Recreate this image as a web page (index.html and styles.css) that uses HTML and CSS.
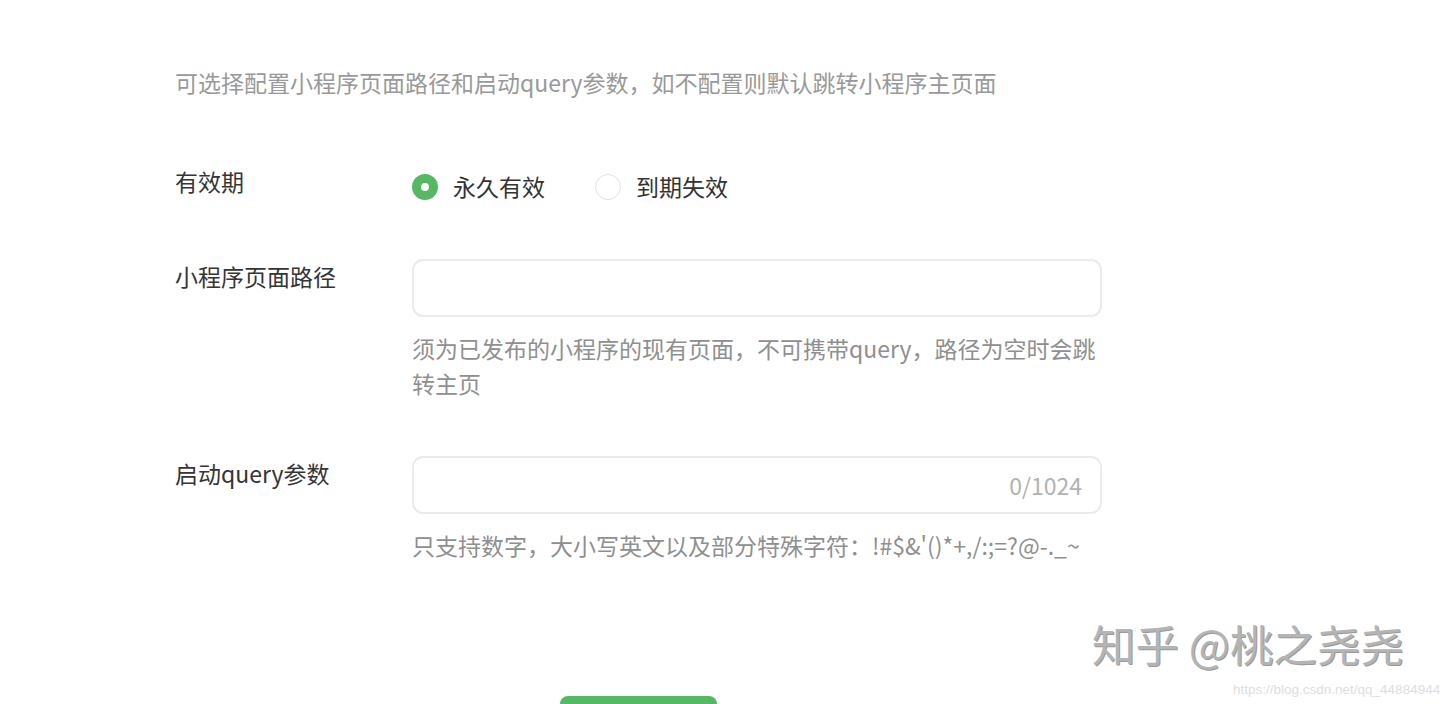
FILE: index.html
```html
<!DOCTYPE html>
<html lang="zh">
<head>
<meta charset="utf-8">
<title>小程序页面路径</title>
<link rel="stylesheet" href="styles.css">
</head>
<body>
<div class="page">
  <p class="intro">可选择配置小程序页面路径和启动query参数，如不配置则默认跳转小程序主页面</p>
  <div class="form">
    <div class="row row-validity">
      <div class="label">有效期</div>
      <div class="options">
        <label class="radio"><span class="dot checked"></span><span>永久有效</span></label>
        <label class="radio"><span class="dot"></span><span>到期失效</span></label>
      </div>
    </div>
    <div class="row row-path">
      <div class="label">小程序页面路径</div>
      <div class="field">
        <div class="input"></div>
        <p class="help">须为已发布的小程序的现有页面，不可携带query，路径为空时会跳转主页</p>
      </div>
    </div>
    <div class="row row-query">
      <div class="label">启动query参数</div>
      <div class="field">
        <div class="input"><span class="counter">0/1024</span></div>
        <p class="help">只支持数字，大小写英文以及部分特殊字符：!#$&amp;'()*+,/:;=?@-._~</p>
      </div>
    </div>
    <div class="actions">
      <button class="btn" type="button" aria-label="确定"></button>
    </div>
  </div>
  <div class="watermark">知乎 @桃之尧尧</div>
  <div class="url">https://blog.csdn.net/qq_44884944</div>
</div>
</body>
</html>
```
FILE: styles.css
```css
html, body {
  margin: 0;
  padding: 0;
  height: 704px;
  overflow: hidden;
  background: #fff;
}
.page {
  position: relative;
  height: 704px;
  padding: 65px 0 0 175px;
  box-sizing: border-box;
  font-family: "Noto Sans CJK SC", "Noto Sans", sans-serif;
  font-size: 23px;
  line-height: 35px;
  color: #333;
}
.intro {
  margin: 0;
  color: #999;
}
.form {
  width: 927px;
  margin-top: 64px;
}
.row {
  display: flex;
  align-items: flex-start;
}
.label {
  width: 237px;
  flex: none;
  color: #353535;
}
.row-validity {
  margin-bottom: 55px;
}
.row-path {
  margin-bottom: 55px;
}
.options {
  display: flex;
  gap: 50px;
  padding-top: 5px;
}
.radio {
  display: flex;
  align-items: center;
  gap: 15px;
}
.dot {
  width: 26px;
  height: 26px;
  border-radius: 50%;
  border: 1.5px solid #e2e2e2;
  box-sizing: border-box;
  background: #fff;
}
.dot.checked {
  border: 9px solid #55b865;
  background: #fff;
}
.field {
  width: 690px;
}
.input {
  height: 58px;
  border: 2px solid #ebebeb;
  border-radius: 11px;
  box-sizing: border-box;
  display: flex;
  align-items: center;
  justify-content: flex-end;
  padding-right: 18px;
}
.counter {
  color: #b2b2b2;
}
.help {
  margin: 14px 0 0;
  color: #8f8f8f;
}
.actions {
  display: flex;
  justify-content: center;
  margin-top: 133px;
}
.btn {
  width: 157px;
  height: 8px;
  border: none;
  border-radius: 8px 8px 0 0;
  background: #55b865;
  padding: 0;
}
.watermark {
  position: absolute;
  left: 1092px;
  top: 617px;
  font-size: 43.5px;
  line-height: 54px;
  color: #b4b4b4;
  text-shadow: 1px 1px 0 #9a9a9a;
  white-space: nowrap;
}
.url {
  position: absolute;
  left: 1233px;
  top: 681px;
  font-family: "Liberation Sans", Arial, sans-serif;
  font-size: 13.5px;
  line-height: 18px;
  color: #dedede;
  white-space: nowrap;
}
```
